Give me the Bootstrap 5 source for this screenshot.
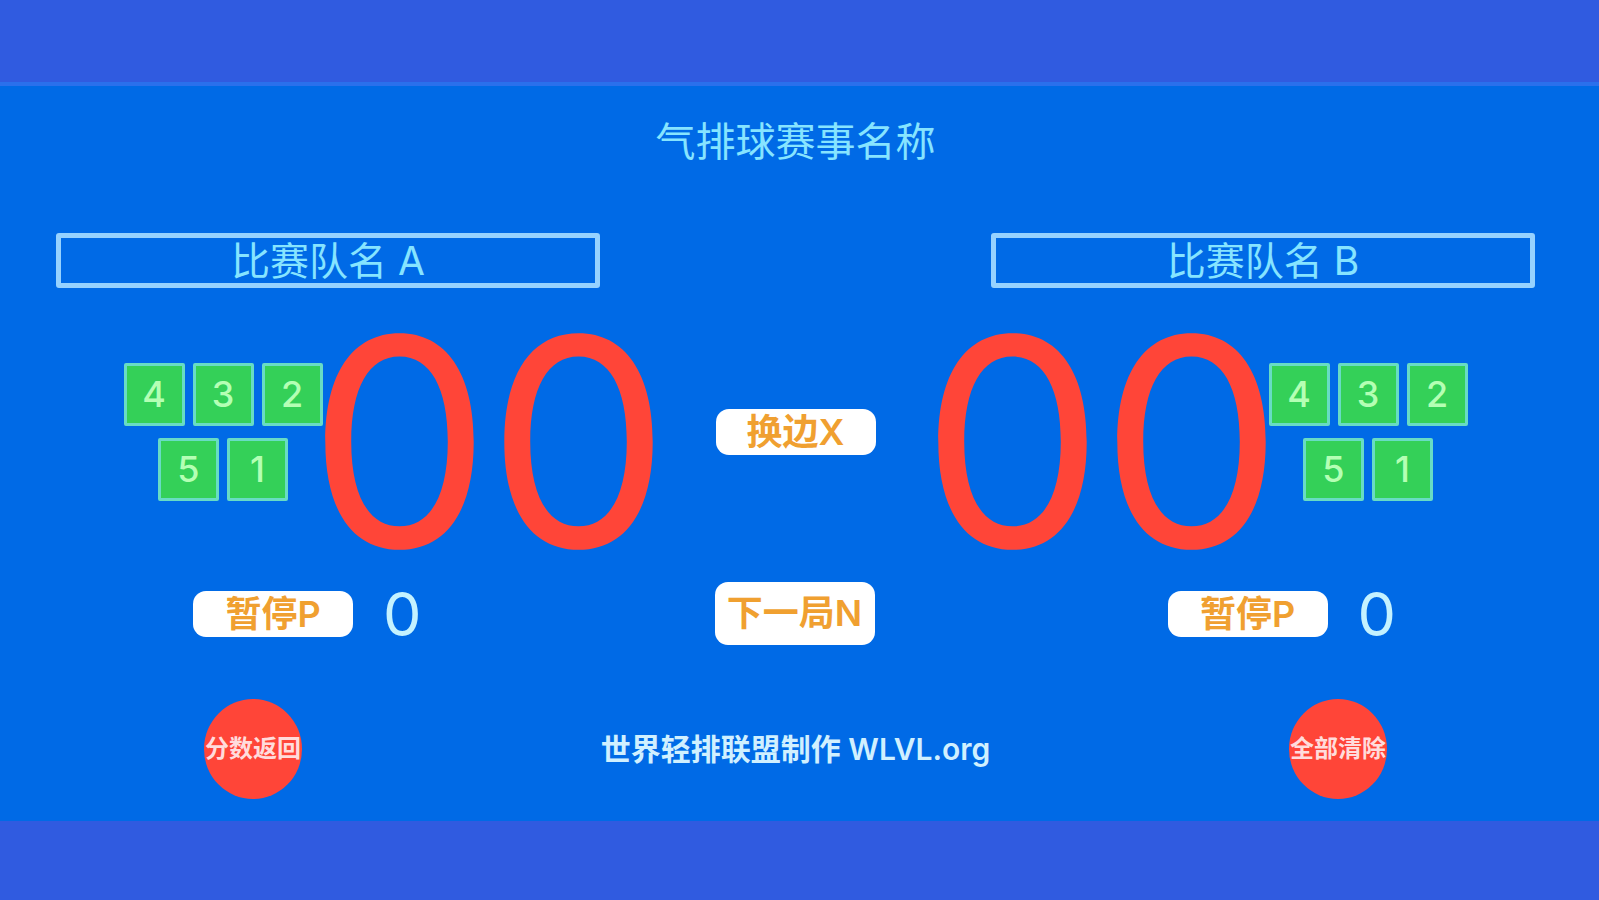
<!DOCTYPE html>
<html lang="zh-CN">
<head>
<meta charset="utf-8">
<meta name="viewport" content="width=device-width, initial-scale=1">
<title>气排球记分牌</title>
<link href="https://cdn.jsdelivr.net/npm/bootstrap@5.3.0/dist/css/bootstrap.min.css" rel="stylesheet">
<style>
  body {
    background: #305be0;
    font-family: Inter, "Noto Sans CJK SC", sans-serif;
    padding: 82px 0 79px;
  }
  .scoreboard {
    background: #006ae6;
    border-top: 4px solid #2a70ec;
    padding: 32px 64px 0 56px;
  }
  .event-title { color: #86e4ff; font-size: 40px; line-height: 48px; }
  .names-row { margin-top: 67px; }
  .team-name {
    width: 544px;
    height: 55px;
    border: 5px solid #96d2ff;
    border-radius: 3px;
    background: transparent;
    color: #86e4ff;
    font-size: 39px;
    line-height: 40px;
    padding: 0 0 5px;
  }
  .score-row { margin-top: 24px; padding: 0 67px; }
  .set-pad { width: 200px; row-gap: 12px; column-gap: 8px; }
  .set-btn {
    width: 61px;
    height: 63px;
    padding: 0;
    border: 3px solid #68dcc4;
    border-radius: 2px;
    background: #34d058;
    color: #b4ffb4;
    font-size: 36px;
    font-weight: 500;
    line-height: 57px;
  }
  .set-btn:hover { background: #2cbd4e; color: #fff; }
  .points {
    color: #ff4538;
    font-size: 290px;
    line-height: 220px;
    padding-top: 20px;
  }
  .digit { display: flex; justify-content: center; width: 179px; }
  .team-a .points { margin-left: -13px; }
  .team-b .points { margin-right: -13px; }
  .control {
    width: 160px;
    height: 46px;
    padding: 0;
    border: 0;
    border-radius: 13px;
    background: #fff;
    color: #f0a030;
    font-size: 36px;
    font-weight: 600;
    line-height: 46px;
  }
  .control:hover { background: #fff4e0; color: #e08c14; }
  .control-tall { height: 63px; line-height: 63px; }
  .control-row { margin-top: 30px; padding: 0 139px 0 137px; }
  .timeout-group { gap: 30px; }
  .timeouts { color: #c4f2ff; font-size: 61px; line-height: 60px; }
  .footer-row { margin-top: 54px; padding: 0 148px; }
  .round-btn {
    width: 98px;
    height: 100px;
    padding: 0;
    border: 0;
    background: #ff4538;
    color: #ffdcdc;
    font-size: 24px;
    font-weight: 600;
    line-height: 100px;
    white-space: nowrap;
  }
  .round-btn:hover { background: #e6382c; color: #fff; }
  .credit { color: #d0f0ff; font-size: 30px; font-weight: 600; line-height: 40px; }
</style>
</head>
<body class="d-flex flex-column min-vh-100">
<main class="scoreboard flex-grow-1">
  <h1 class="event-title text-center fw-normal mb-0">气排球赛事名称</h1>

  <div class="names-row d-flex justify-content-between">
    <input class="team-name text-center" type="text" value="比赛队名 A" aria-label="A 队名称">
    <input class="team-name text-center" type="text" value="比赛队名 B" aria-label="B 队名称">
  </div>

  <div class="score-row d-flex justify-content-between align-items-center">
    <section class="team-a d-flex align-items-center">
      <div class="set-pad d-flex flex-wrap justify-content-center">
        <button class="btn set-btn" type="button">4</button>
        <button class="btn set-btn" type="button">3</button>
        <button class="btn set-btn" type="button">2</button>
        <button class="btn set-btn" type="button">5</button>
        <button class="btn set-btn" type="button">1</button>
      </div>
      <div class="points d-flex"><span class="digit">0</span><span class="digit">0</span></div>
    </section>
    <button class="btn control" type="button">换边X</button>
    <section class="team-b d-flex align-items-center">
      <div class="points d-flex"><span class="digit">0</span><span class="digit">0</span></div>
      <div class="set-pad d-flex flex-wrap justify-content-center">
        <button class="btn set-btn" type="button">4</button>
        <button class="btn set-btn" type="button">3</button>
        <button class="btn set-btn" type="button">2</button>
        <button class="btn set-btn" type="button">5</button>
        <button class="btn set-btn" type="button">1</button>
      </div>
    </section>
  </div>

  <div class="control-row d-flex justify-content-between align-items-center">
    <div class="timeout-group d-flex align-items-center">
      <button class="btn control" type="button">暂停P</button>
      <span class="timeouts">0</span>
    </div>
    <button class="btn control control-tall" type="button">下一局N</button>
    <div class="timeout-group d-flex align-items-center">
      <button class="btn control" type="button">暂停P</button>
      <span class="timeouts">0</span>
    </div>
  </div>

  <div class="footer-row d-flex justify-content-between align-items-center">
    <button class="btn round-btn rounded-circle" type="button">分数返回</button>
    <div class="credit">世界轻排联盟制作 WLVL.org</div>
    <button class="btn round-btn rounded-circle" type="button">全部清除</button>
  </div>
</main>
<script src="https://cdn.jsdelivr.net/npm/bootstrap@5.3.0/dist/js/bootstrap.bundle.min.js"></script>
</body>
</html>
